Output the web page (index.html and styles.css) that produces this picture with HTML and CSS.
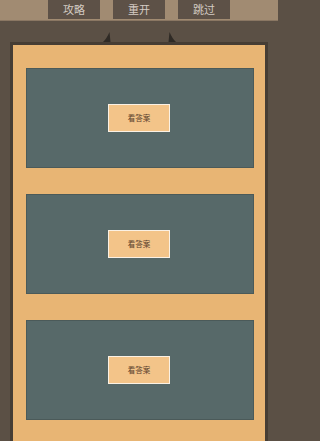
FILE: index.html
```html
<!DOCTYPE html>
<html lang="zh">
<head>
<meta charset="utf-8">
<meta name="viewport" content="width=278">
<link rel="stylesheet" href="styles.css">
</head>
<body>
<div class="page">
  <div class="topbar">
    <div class="tab">攻略</div>
    <div class="tab">重开</div>
    <div class="tab">跳过</div>
  </div>
  <div class="marks">
    <svg class="mark" width="8" height="10" viewBox="0 0 8 10"><path d="M6.5 0 L7.5 10 L0 10 Q3.5 7 6.5 0 Z" fill="#2f2a25"/></svg>
    <svg class="mark" width="8" height="10" viewBox="0 0 8 10"><path d="M1.5 0 L0.5 10 L8 10 Q4.5 7 1.5 0 Z" fill="#2f2a25"/></svg>
  </div>
  <div class="panel">
    <div class="card"><div class="answer">看答案</div></div>
    <div class="card"><div class="answer">看答案</div></div>
    <div class="card"><div class="answer">看答案</div></div>
  </div>
</div>
</body>
</html>
```
FILE: styles.css
```css
html, body {
  margin: 0;
  padding: 0;
  background: #5b5045;
  overflow: hidden;
}
body {
  font-family: "Noto Sans CJK SC", "Noto Sans", sans-serif;
}
.page {
  width: 278px;
  height: 441px;
  overflow: hidden;
  display: flex;
  flex-direction: column;
}
.topbar {
  height: 20px;
  flex: none;
  background: #a18b72;
  border-bottom: 1px solid #8a7763;
  display: flex;
  justify-content: center;
  gap: 13px;
}
.tab {
  width: 52px;
  height: 19px;
  background: #5d5147;
  color: #d4ccc4;
  font-size: 11px;
  line-height: 18px;
  text-align: center;
}
.marks {
  height: 21px;
  flex: none;
  display: flex;
  justify-content: center;
  align-items: flex-end;
  gap: 57px;
}
.mark {
  display: block;
}
.panel {
  flex: 1;
  margin: 0 10px;
  border: 3px solid #463d34;
  border-bottom: none;
  background: #e8b574;
  padding: 23px 11px 0 13px;
  display: flex;
  flex-direction: column;
  gap: 26px;
}
.card {
  height: 100px;
  flex: none;
  background: #576969;
  border: 1px solid #4b5a59;
  box-sizing: border-box;
  display: flex;
  align-items: center;
  justify-content: center;
}
.answer {
  width: 62px;
  height: 28px;
  box-sizing: border-box;
  border: 1.5px solid #fbf1e4;
  background: #f3c489;
  color: #5a3f2c;
  font-size: 7.5px;
  line-height: 25px;
  text-align: center;
  margin-left: -2px;
}
```
